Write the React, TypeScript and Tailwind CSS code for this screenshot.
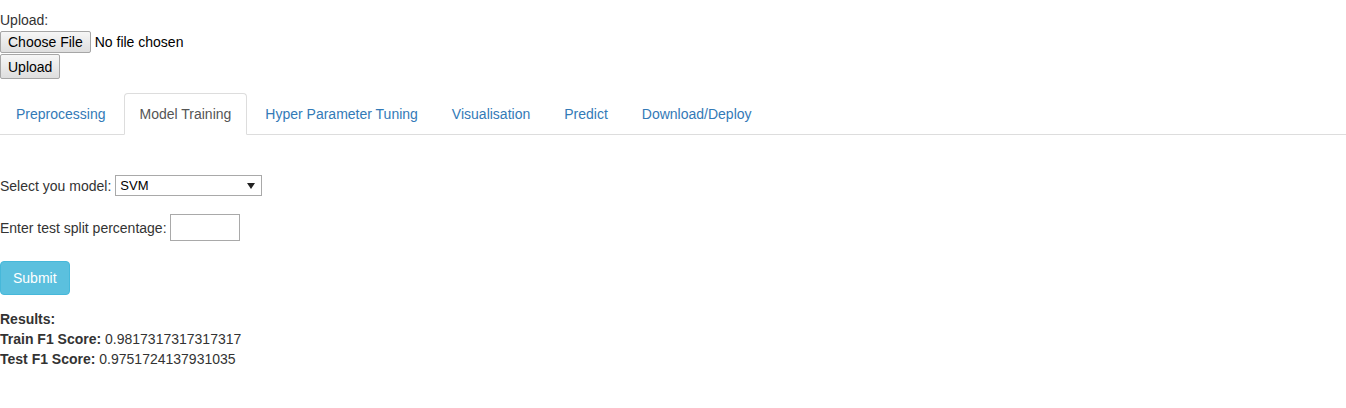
import React from 'react';

const tabs = ['Preprocessing', 'Model Training', 'Hyper Parameter Tuning', 'Visualisation', 'Predict', 'Download/Deploy'];

const App: React.FC = () => {
    return (
        <div className="bg-white min-h-[408px] text-[14px] leading-[20px] text-[#333] font-['Liberation_Sans',Arial,sans-serif]">
            <div className="pt-[10px]">
                <div>Upload:</div>
                <div className="flex items-center h-[22px] mt-[1px]">
                    <span className="h-[22px] px-[7px] flex items-center border border-[#a6a6a6] rounded-[2px] bg-gradient-to-b from-[#f6f6f6] to-[#dedede] text-black">
                        Choose File
                    </span>
                    <span className="ml-[4px] text-black">No file chosen</span>
                </div>
                <div className="mt-[1px]">
                    <span className="inline-flex items-center h-[25px] px-[7px] border border-[#a6a6a6] rounded-[2px] bg-gradient-to-b from-[#f6f6f6] to-[#dedede] text-black">
                        Upload
                    </span>
                </div>
            </div>

            <ul className="mt-[14px] flex border-b border-[#ddd]">
                {tabs.map(t => (
                    <li key={t} className="mr-[2px] -mb-px">
                        <a className={`block px-[15px] py-[10px] border rounded-t-[4px] ${
                            t === 'Model Training'
                                ? 'border-[#ddd] border-b-transparent bg-white text-[#555]'
                                : 'border-transparent text-[#337ab7]'
                        }`}>
                            {t}
                        </a>
                    </li>
                ))}
            </ul>

            <div className="mt-[40px] flex items-center h-[21px]">
                <span>Select you model:</span>
                <div className="ml-[4px] w-[147px] h-[21px] border border-[#a9a9a9] flex items-center justify-between pl-[4px] pr-[6px] text-black">
                    <span className="text-[13px]">SVM</span>
                    <svg width="8" height="6" viewBox="0 0 8 6">
                        <path d="M0 0H8L4 6Z" fill="#222" />
                    </svg>
                </div>
            </div>

            <div className="mt-[18px] flex items-center h-[27px]">
                <span>Enter test split percentage:</span>
                <div className="ml-[3px] w-[70px] h-[27px] border border-[#a9a9a9]" />
            </div>

            <div className="mt-[20px]">
                <button className="h-[34px] px-[12px] rounded-[4px] bg-[#5bc0de] border border-[#46b8da] text-white">
                    Submit
                </button>
            </div>

            <div className="mt-[14px]">
                <div className="font-bold">Results:</div>
                <div><b>Train F1 Score:</b> 0.9817317317317317</div>
                <div><b>Test F1 Score:</b> 0.9751724137931035</div>
            </div>
        </div>
    );
};

export default App;
